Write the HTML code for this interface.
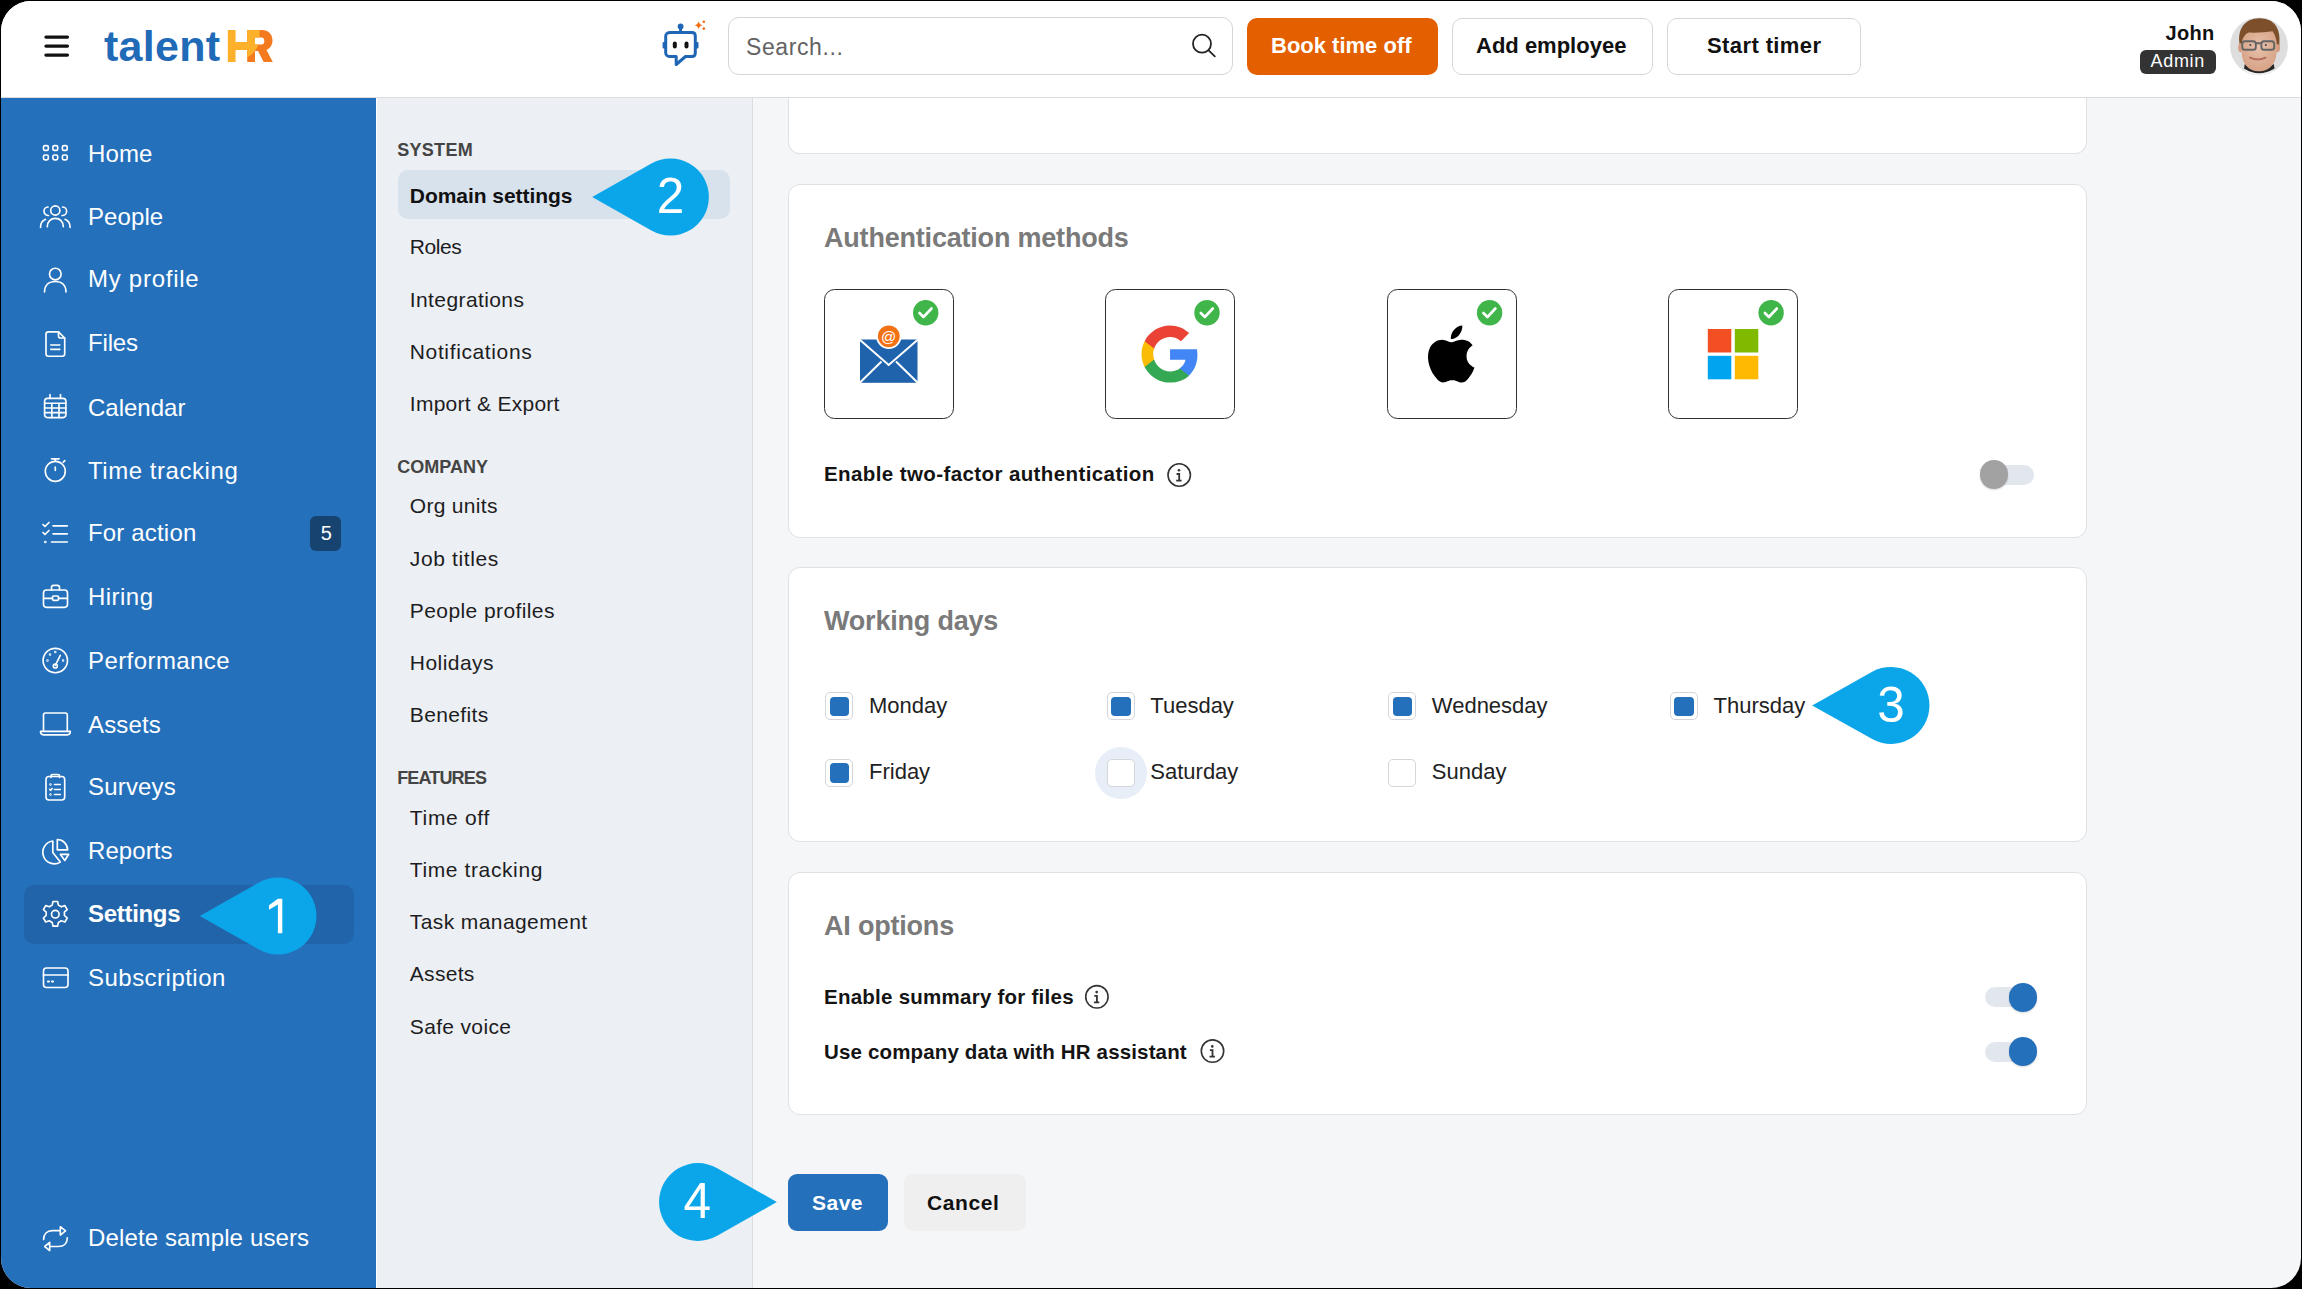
<!DOCTYPE html>
<html><head><meta charset="utf-8">
<style>
*{box-sizing:border-box;margin:0;padding:0}
html,body{width:2302px;height:1289px;overflow:hidden;background:#000}
body{font-family:"Liberation Sans",sans-serif;position:relative}
#frame{position:absolute;left:1px;top:1px;width:2300px;height:1287px;border-radius:30px;overflow:hidden;background:#f5f6f8}
#c{position:absolute;left:-1px;top:-1px;width:2302px;height:1289px}
.a{position:absolute}
.t{position:absolute;line-height:1;white-space:nowrap}
#hdr{position:absolute;left:0;top:0;width:2302px;height:98px;background:#fff;border-bottom:1px solid #dadcdf}
#side{position:absolute;left:0;top:98px;width:376px;height:1191px;background:#2470bb}
#sub{position:absolute;left:376px;top:98px;width:377px;height:1191px;background:#eceff3;border-left:1px solid #fff;border-right:1px solid #dcdee2}
.sn{color:#fff;font-size:24px;letter-spacing:0.45px}
.ic{position:absolute;overflow:visible}
.sec{color:#444;font-size:18px;font-weight:700;letter-spacing:0.3px}
.si{color:#1d1d1f;font-size:21px;letter-spacing:0.35px}
.card{position:absolute;left:788px;width:1299px;background:#fff;border:1px solid #dfe1e4;border-radius:12px}
.h2{color:#7a7a7a;font-size:27px;font-weight:700;letter-spacing:-0.2px}
.lbl{color:#141414;font-size:20.5px;font-weight:700;letter-spacing:0.25px}
.day{color:#222;font-size:22px}
.abox{position:absolute;width:130px;height:130px;border:1.9px solid #2f2f2f;border-radius:10.5px;background:#fff}
.chk{position:absolute;width:28px;height:28px;border:1px solid #d4d6d9;border-radius:5px;background:#fff}
.chk i{position:absolute;left:3.5px;top:3.5px;width:19.5px;height:19.5px;border-radius:4px;background:#2470bb}
.btn{position:absolute;border-radius:10px}
</style></head><body>
<div id="frame"><div id="c">

<!-- HEADER -->
<div id="hdr"></div>
<svg class="ic" style="left:0;top:0" width="300" height="97" viewBox="0 0 300 97">
  <g stroke="#111" stroke-width="3.4" stroke-linecap="round"><path d="M46 37.1H67.4M46 46.1H67.4M46 55.1H67.4"/></g>
</svg>
<div class="t" style="left:104px;top:25px;font-size:43px;font-weight:700;color:#1f6bb8;letter-spacing:0.3px">talent</div>
<svg class="ic" style="left:0;top:0" width="300" height="97" viewBox="0 0 300 97">
  <path fill="#f47a20" fill-rule="evenodd" d="M247.2 30.1H262C268.5 30.1 272.5 34.5 272.5 40.5C272.5 45 270 48.5 266.5 50L272.8 62H263.7L258 51H255V62H247.2ZM255 37.4H261.5C263.5 37.4 264.3 39 264.3 41C264.3 43 263.5 44.6 261.5 44.6H255Z"/>
  <path fill="#fdb02a" d="M227.8 30.1H235.6V42.1H247.2V30.1H259.6V37.4H255V44.6H258.5C256.5 50 252.5 54.5 247.2 57.5V49.9H235.6V62H227.8Z"/>
</svg>
<!-- robot -->
<svg class="ic" style="left:650px;top:10px" width="70" height="70" viewBox="650 10 70 70">
  <g fill="none" stroke="#1f66b5" stroke-width="3" stroke-linejoin="round">
    <path d="M670 32.6H692C694 32.6 695.3 34 695.3 36V53C695.3 55 694 56.5 692 56.5H685.5L676.2 64.5V56.5H670C668 56.5 665.7 55 665.7 53V36C665.7 34 668 32.6 670 32.6Z"/>
    <path d="M680.6 28.5V32.6"/>
  </g>
  <circle cx="680.6" cy="26.5" r="2.9" fill="#1f66b5"/>
  <rect x="662.6" y="42" width="3" height="6.5" rx="1" fill="#1f66b5"/>
  <rect x="695.5" y="42" width="3" height="6.5" rx="1" fill="#1f66b5"/>
  <rect x="672.8" y="41.6" width="4" height="7" rx="2" fill="#111"/>
  <rect x="684.5" y="41.6" width="4" height="7" rx="2" fill="#111"/>
  <path fill="#f26b0f" d="M698.6 21.2Q699.3 24.5 702.6 25.2Q699.3 25.9 698.6 29.2Q697.9 25.9 694.6 25.2Q697.9 24.5 698.6 21.2Z"/>
  <circle cx="703.8" cy="21.7" r="1.3" fill="#f26b0f"/>
  <circle cx="703.8" cy="28.6" r="1.3" fill="#f26b0f"/>
</svg>
<!-- search -->
<div class="a" style="left:728px;top:17px;width:505px;height:58px;border:1.3px solid #d6d6d6;border-radius:11px;background:#fff"></div>
<div class="t" style="left:746px;top:36px;font-size:23px;color:#636363;letter-spacing:0.6px">Search...</div>
<svg class="ic" style="left:1180px;top:25px" width="50" height="40" viewBox="1180 25 50 40">
  <circle cx="1202" cy="43.7" r="9" fill="none" stroke="#222" stroke-width="1.8"/>
  <path d="M1208.6 50.3L1214.8 56.3" stroke="#222" stroke-width="1.8" stroke-linecap="round"/>
</svg>
<div class="btn" style="left:1247px;top:17.5px;width:190.5px;height:57px;background:#e35f00"></div>
<div class="t" style="left:1271px;top:35px;font-size:22px;font-weight:700;color:#fff">Book time off</div>
<div class="btn" style="left:1452px;top:17.5px;width:200.5px;height:57px;background:#fff;border:1.3px solid #d6d6d6"></div>
<div class="t" style="left:1476px;top:35px;font-size:22px;font-weight:700;color:#111">Add employee</div>
<div class="btn" style="left:1667.3px;top:17.5px;width:194px;height:57px;background:#fff;border:1.3px solid #d6d6d6"></div>
<div class="t" style="left:1707px;top:35px;font-size:22px;font-weight:700;color:#111;letter-spacing:0.4px">Start timer</div>
<div class="t" style="left:2165.5px;top:23px;font-size:20px;font-weight:700;color:#111;letter-spacing:0.35px">John</div>
<div class="a" style="left:2140px;top:50px;width:75.5px;height:23.5px;border-radius:6px;background:#333"></div>
<div class="t" style="left:2150.5px;top:52.4px;font-size:18px;color:#fff;letter-spacing:0.7px">Admin</div>
<!-- avatar -->
<svg class="ic" style="left:2226px;top:14px" width="66" height="66" viewBox="2226 14 66 66">
  <defs><clipPath id="av"><circle cx="2259" cy="46.3" r="28.6"/></clipPath>
  <radialGradient id="skin" cx="0.5" cy="0.45" r="0.6"><stop offset="0" stop-color="#e6c0aa"/><stop offset="1" stop-color="#d6a184"/></radialGradient></defs>
  <circle cx="2259" cy="46.3" r="28.9" fill="#dedede"/>
  <g clip-path="url(#av)">
    <path fill="#f2f2f2" d="M2236 80Q2240 68 2259 68Q2278 68 2282 80Z"/>
    <path fill="#262626" d="M2244.8 64Q2259 74 2273.8 64L2274.5 68.5Q2259 78 2244 68.5Z"/>
    <ellipse cx="2240.8" cy="47.5" rx="2.6" ry="4.8" fill="#d39c80"/>
    <ellipse cx="2277.4" cy="47.5" rx="2.6" ry="4.8" fill="#d39c80"/>
    <path fill="url(#skin)" d="M2241.5 38C2241.5 31 2250 27.5 2259 27.5C2268 27.5 2276.8 31 2276.8 38L2276.6 51C2276.4 65.5 2268 71.3 2259 71.3C2250 71.3 2241.8 65.5 2241.6 51Z"/>
    <path fill="#7d4f2b" d="M2239.5 43.5C2237.5 30 2244 18.2 2259.5 18.2C2275 18.2 2281.2 29.5 2279.3 44.7L2276.8 44C2276.3 38.5 2275 34 2272.5 31.2C2266 31.8 2258 33.2 2248.5 32.6C2245 34.2 2242.3 38 2241.8 43.5Z"/>
    <g fill="none" stroke="#646464" stroke-width="1.9"><rect x="2242.3" y="41.2" width="13.5" height="8.6" rx="2.6"/><rect x="2261.4" y="41.2" width="12.8" height="8.6" rx="2.6"/><path d="M2255.8 43.2H2261.4"/></g>
    <circle cx="2250.3" cy="45" r="1" fill="#445"/><circle cx="2265.8" cy="45" r="1" fill="#445"/>
    <path d="M2250 57.6Q2258 61.2 2265.5 57.6" stroke="#b56e5c" stroke-width="2" fill="none" stroke-linecap="round"/>
  </g>
</svg>

<!-- SIDEBAR -->
<div id="side"></div>
<div class="a" style="left:23.5px;top:885px;width:330px;height:59px;border-radius:10px;background:#2164a9"></div>
<div class="t sn" style="left:88px;top:141.7px;letter-spacing:0.15px">Home</div>
<div class="t sn" style="left:88px;top:204.6px;letter-spacing:0.09px">People</div>
<div class="t sn" style="left:88px;top:267.1px;letter-spacing:0.73px">My profile</div>
<div class="t sn" style="left:88px;top:330.7px;letter-spacing:-0.15px">Files</div>
<div class="t sn" style="left:88px;top:395.6px;letter-spacing:0px">Calendar</div>
<div class="t sn" style="left:88px;top:458.5px;letter-spacing:0.55px">Time tracking</div>
<div class="t sn" style="left:88px;top:521.1px;letter-spacing:0.17px">For action</div>
<div class="t sn" style="left:88px;top:584.6px;letter-spacing:0.47px">Hiring</div>
<div class="t sn" style="left:88px;top:648.6px;letter-spacing:0.42px">Performance</div>
<div class="t sn" style="left:88px;top:712.9px;letter-spacing:0.17px">Assets</div>
<div class="t sn" style="left:88px;top:775.4px;letter-spacing:0.18px">Surveys</div>
<div class="t sn" style="left:88px;top:839.1px;letter-spacing:0.08px">Reports</div>
<div class="t sn" style="left:88px;top:902.4px;font-weight:700;letter-spacing:-0.3px">Settings</div>
<div class="t sn" style="left:88px;top:965.8px;letter-spacing:0.48px">Subscription</div>
<div class="t sn" style="left:88px;top:1226.1px;letter-spacing:0.13px">Delete sample users</div>
<div class="a" style="left:310px;top:515.5px;width:31px;height:35.5px;border-radius:6px;background:#164370"></div>
<div class="t" style="left:320.7px;top:523.3px;font-size:20px;color:#fff">5</div>

<svg class="ic" style="left:0;top:97px" width="376" height="1192" viewBox="0 97 376 1192">
 <g fill="none" stroke="#fff" stroke-width="1.65" stroke-linecap="round" stroke-linejoin="round">
  <!-- home grid -->
  <rect x="43.5" y="145.6" width="4.8" height="4.8" rx="1.5"/><rect x="52.9" y="145.6" width="4.8" height="4.8" rx="1.5"/><rect x="62.4" y="145.6" width="4.8" height="4.8" rx="1.5"/>
  <rect x="43.5" y="155" width="4.8" height="4.8" rx="1.5"/><rect x="52.9" y="155" width="4.8" height="4.8" rx="1.5"/><rect x="62.4" y="155" width="4.8" height="4.8" rx="1.5"/>
  <!-- people -->
  <circle cx="55.3" cy="210.5" r="4.6"/>
  <path d="M48 207A4 4 0 0 0 48.5 215.5M62.6 207A4 4 0 0 1 62.1 215.5"/>
  <path d="M47.3 226.7C47.3 221.5 50.8 218.4 55.3 218.4C59.8 218.4 63.3 221.5 63.3 226.7"/>
  <path d="M40.5 227.5C40.5 223 42.5 220.5 45.5 219.3M70.1 227.5C70.1 223 68.1 220.5 65.1 219.3"/>
  <!-- my profile -->
  <circle cx="55.3" cy="274" r="5.8"/>
  <path d="M44.5 292C44.5 285 49 281.5 55.3 281.5C61.6 281.5 66 285 66 292"/>
  <!-- files -->
  <path d="M48.5 331.8H58.5L64.7 338V353.8Q64.7 356.2 62.3 356.2H48.5Q46 356.2 46 353.8V334.3Q46 331.8 48.5 331.8Z"/>
  <path d="M58.5 331.8V336Q58.5 338 60.5 338H64.7"/>
  <path d="M50.8 345H59.8M50.8 349.3H59.8"/>
  <!-- calendar -->
  <rect x="44.6" y="398.3" width="21.3" height="19.3" rx="3"/>
  <path d="M50 394.5V398.3M60.5 394.5V398.3M44.6 403.2H65.9M44.6 408H65.9M44.6 412.6H65.9M51.8 403.2V417.6M59 403.2V417.6"/>
  <!-- timer -->
  <circle cx="55.3" cy="471.3" r="10"/>
  <path d="M51.5 458.8H59.1M55.3 458.8V461.3M55.3 467V470.5M63.3 462.2L64.8 460.7"/>
  <!-- for action -->
  <path d="M43 524.5L45 526.5L49 522.5M43 532.5L45 534.5L49 530.5"/>
  <path d="M53 525.8H67.3M53 533.8H67.3M51.5 542H67.3"/>
  <circle cx="45.3" cy="542" r="0.5"/>
  <!-- hiring -->
  <rect x="43.5" y="590" width="24" height="17.3" rx="3"/>
  <path d="M51.5 590V587.5Q51.5 585.3 53.7 585.3H57.3Q59.5 585.3 59.5 587.5V590M43.5 598.3H52.5M58.5 598.3H67.5"/>
  <rect x="52.5" y="596" width="6" height="4.3" rx="1"/>
  <!-- performance -->
  <circle cx="55.3" cy="660.5" r="12.2"/>
  <path d="M55.3 665.3L60.3 655.3"/>
  <circle cx="55.3" cy="666" r="2"/>
  <circle cx="47.5" cy="660.5" r="0.4"/><circle cx="50" cy="654.5" r="0.4"/><circle cx="55.3" cy="652" r="0.4"/><circle cx="63.1" cy="660.5" r="0.4"/>
  <!-- assets laptop -->
  <path d="M43.5 730.5V715Q43.5 713 45.5 713H65.3Q67.3 713 67.3 715V730.5"/>
  <path d="M40.5 731.3H70.3Q70.3 734.8 67.3 734.8H43.5Q40.5 734.8 40.5 731.3Z"/>
  <!-- surveys -->
  <rect x="46" y="776.5" width="18.7" height="23.5" rx="3"/>
  <path d="M51 777.5V776Q51 774.5 52.5 774.5H58Q59.5 774.5 59.5 776V777.5"/>
  <path d="M54.5 784.5H60.3M54.5 789.5H60.3M54.5 794.5H60.3M49.7 789.3L50.7 790.3L52.2 788.5"/>
  <circle cx="50.5" cy="784.5" r="0.4"/><circle cx="50.5" cy="794.5" r="0.4"/>
  <!-- reports -->
  <path d="M52.8 841V852.4L60.3 862.1A11.45 11.45 0 1 1 52.8 841Z"/>
  <path d="M57.3 839.5V849.9H67.6A10.3 10.3 0 0 0 57.3 839.5Z"/>
  <path d="M60.3 854.3H68.7L64.8 860.5Z"/>
  <!-- settings -->
  <circle cx="55.3" cy="914.2" r="3.8"/>
  <path d="M53 901.5H57.6L58.4 905.1L61.3 906.8L64.9 905.6L67.2 909.6L64.4 912.1V915.4L67.2 918L64.9 922L61.3 920.8L58.4 922.5L57.6 926.1H53L52.2 922.5L49.3 920.8L45.7 922L43.4 918L46.2 915.4V912.1L43.4 909.6L45.7 905.6L49.3 906.8L52.2 905.1Z"/>
  <!-- subscription -->
  <rect x="43.5" y="968" width="24.5" height="19.5" rx="3"/>
  <path d="M43.5 975H68"/>
  <path d="M48 981.5H49M52 981.5H53" stroke-width="2.2"/>
  <!-- delete sample users -->
  <path d="M43.6 1239.6C43.6 1234 47 1230.6 52.5 1230.6H60.3"/>
  <path d="M60.3 1226.7L65.5 1230.9L60.3 1235.1Z"/>
  <path d="M67.3 1237.9C67.3 1243 64 1246.5 58.5 1246.5H49.7"/>
  <path d="M49.7 1242.4L44.7 1246.5L49.7 1250.6Z"/>
 </g>
</svg>

<!-- SUB NAV -->
<div id="sub"></div>
<div class="a" style="left:398px;top:170.2px;width:332px;height:49.3px;border-radius:10px;background:#d8e2ed"></div>
<div class="t sec" style="left:397.2px;top:140.8px">SYSTEM</div>
<div class="t si" style="left:409.8px;top:184.8px;font-weight:700;color:#111;letter-spacing:-0.05px">Domain settings</div>
<div class="t si" style="left:409.8px;top:236.2px;letter-spacing:-0.43px">Roles</div>
<div class="t si" style="left:409.8px;top:288.8px;letter-spacing:0.4px">Integrations</div>
<div class="t si" style="left:409.8px;top:341px;letter-spacing:0.63px">Notifications</div>
<div class="t si" style="left:409.8px;top:393.3px;letter-spacing:0.27px">Import &amp; Export</div>
<div class="t sec" style="left:397.2px;top:458.4px;letter-spacing:0.02px">COMPANY</div>
<div class="t si" style="left:409.8px;top:495.3px;letter-spacing:0.3px">Org units</div>
<div class="t si" style="left:409.8px;top:548.1px;letter-spacing:0.62px">Job titles</div>
<div class="t si" style="left:409.8px;top:600.1px;letter-spacing:0.41px">People profiles</div>
<div class="t si" style="left:409.8px;top:652.3px;letter-spacing:0.45px">Holidays</div>
<div class="t si" style="left:409.8px;top:704.3px;letter-spacing:0.38px">Benefits</div>
<div class="t sec" style="left:397.2px;top:768.5px;letter-spacing:-0.85px">FEATURES</div>
<div class="t si" style="left:409.8px;top:806.8px;letter-spacing:0.69px">Time off</div>
<div class="t si" style="left:409.8px;top:858.5px;letter-spacing:0.61px">Time tracking</div>
<div class="t si" style="left:409.8px;top:911.4px;letter-spacing:0.41px">Task management</div>
<div class="t si" style="left:409.8px;top:963.1px;letter-spacing:0.31px">Assets</div>
<div class="t si" style="left:409.8px;top:1016px;letter-spacing:0.34px">Safe voice</div>

<!-- MAIN CARDS -->
<div class="card" style="top:98px;height:56px;border-top:none;border-radius:0 0 12px 12px"></div>
<div class="card" style="top:183.5px;height:354.5px"></div>
<div class="card" style="top:567.3px;height:274.5px"></div>
<div class="card" style="top:871.8px;height:243.3px"></div>

<div class="t h2" style="left:824px;top:224.6px">Authentication methods</div>
<div class="abox" style="left:824px;top:289.3px"></div>
<div class="abox" style="left:1105.3px;top:289.3px"></div>
<div class="abox" style="left:1386.8px;top:289.3px"></div>
<div class="abox" style="left:1668.3px;top:289.3px"></div>
<svg class="ic" style="left:800px;top:280px" width="1020" height="150" viewBox="800 280 1020 150">
  <g id="ck"><circle cx="925.7" cy="312.8" r="12.7" fill="#3fb54a"/><path d="M919.5 313L923.5 317L931.5 308.5" fill="none" stroke="#fff" stroke-width="2.6" stroke-linecap="round" stroke-linejoin="round"/></g>
  <use href="#ck" x="281.3"/><use href="#ck" x="563.9"/><use href="#ck" x="845.4"/>
  <!-- envelope -->
  <rect x="860" y="339.5" width="57.5" height="43.3" fill="#1f63ad"/>
  <path d="M859.5 339.5L888.7 365L918 339.5M859.5 383L881.5 361.5M918 383L896 361.5" fill="none" stroke="#fff" stroke-width="2"/>
  <circle cx="888.8" cy="336.3" r="11.8" fill="#f47216" stroke="#fff" stroke-width="1.8"/>
  <text x="888.5" y="341.5" font-family="Liberation Sans" font-size="15" fill="#fff" text-anchor="middle">@</text>
  <!-- google G -->
  <g transform="translate(1141.5 325.5) scale(2.38)">
    <path fill="#4285F4" d="M23.5 12.3c0-.8-.1-1.6-.2-2.3H12v4.4h6.5c-.3 1.5-1.1 2.7-2.4 3.6v3h3.9c2.2-2.1 3.5-5.1 3.5-8.7z"/>
    <path fill="#34A853" d="M12 24c3.2 0 6-1.1 8-2.9l-3.9-3c-1.1.7-2.4 1.2-4.1 1.2-3.1 0-5.8-2.1-6.7-5H1.3v3.1C3.3 21.3 7.4 24 12 24z"/>
    <path fill="#FBBC05" d="M5.3 14.3c-.2-.7-.4-1.5-.4-2.3s.1-1.6.4-2.3V6.6H1.3C.5 8.2 0 10 0 12s.5 3.8 1.3 5.4l4-3.1z"/>
    <path fill="#EA4335" d="M12 4.8c1.8 0 3.3.6 4.6 1.8l3.4-3.4C17.9 1.2 15.2 0 12 0 7.4 0 3.3 2.7 1.3 6.6l4 3.1c.9-2.8 3.6-4.9 6.7-4.9z"/>
  </g>
  <!-- apple -->
  <g transform="translate(1420.6 320.4) scale(2.8)">
    <path fill="#000" d="M16.4 12.8c0-2.6 2.1-3.8 2.2-3.9-1.2-1.8-3.1-2-3.7-2-1.6-.2-3.1.9-3.9.9-.8 0-2-.9-3.3-.9-1.7 0-3.3 1-4.2 2.5-1.8 3.1-.5 7.7 1.3 10.2.9 1.2 1.9 2.6 3.2 2.6 1.3-.1 1.8-.8 3.3-.8 1.6 0 2 .8 3.4.8 1.4 0 2.3-1.3 3.1-2.5 1-1.4 1.4-2.8 1.4-2.9-.1 0-2.8-1-2.8-4zM13.8 5.1c.7-.9 1.2-2.1 1.1-3.3-1 0-2.3.7-3 1.6-.7.8-1.2 2-1.1 3.2 1.1.1 2.3-.6 3-1.5z"/>
  </g>
  <!-- microsoft -->
  <rect x="1707.8" y="329" width="23.5" height="23.5" fill="#f25022"/>
  <rect x="1734.8" y="329" width="23.5" height="23.5" fill="#7fba00"/>
  <rect x="1707.8" y="355.8" width="23.5" height="23.5" fill="#00a4ef"/>
  <rect x="1734.8" y="355.8" width="23.5" height="23.5" fill="#ffb900"/>
</svg>

<div class="t lbl" style="left:824px;top:464.2px;letter-spacing:0.4px">Enable two-factor authentication</div>
<svg class="ic" style="left:1160px;top:455px" width="40" height="40" viewBox="1160 455 40 40"><g id="inf"><circle cx="1179.2" cy="475" r="11.2" fill="none" stroke="#333" stroke-width="1.6"/><circle cx="1179" cy="470.3" r="1.3" fill="#333"/><path d="M1176.6 474H1179.2V480.6M1176.2 480.6H1181.6" fill="none" stroke="#333" stroke-width="1.8"/></g></svg>
<!-- toggle off -->
<div class="a" style="left:1984px;top:465px;width:50px;height:20px;border-radius:10px;background:#e2e7ee"></div>
<div class="a" style="left:1979.6px;top:460.2px;width:28.8px;height:28.8px;border-radius:50%;background:#a2a2a2;box-shadow:0 1px 2px rgba(0,0,0,.15)"></div>

<div class="t h2" style="left:824px;top:608.4px">Working days</div>
<div class="a" style="left:1094.8px;top:746.6px;width:52px;height:52px;border-radius:50%;background:#e7eef7"></div>
<div class="chk" style="left:825.3px;top:692.3px"><i></i></div>
<div class="chk" style="left:1106.6px;top:692.3px"><i></i></div>
<div class="chk" style="left:1388.1px;top:692.3px"><i></i></div>
<div class="chk" style="left:1669.8px;top:692.3px"><i></i></div>
<div class="chk" style="left:825.3px;top:758.5px"><i></i></div>
<div class="chk" style="left:1106.6px;top:758.5px"></div>
<div class="chk" style="left:1388.1px;top:758.5px"></div>
<div class="t day" style="left:869px;top:694.9px">Monday</div>
<div class="t day" style="left:1150.3px;top:694.9px">Tuesday</div>
<div class="t day" style="left:1431.8px;top:694.9px">Wednesday</div>
<div class="t day" style="left:1713.5px;top:694.9px">Thursday</div>
<div class="t day" style="left:869px;top:761.1px">Friday</div>
<div class="t day" style="left:1150.3px;top:761.1px">Saturday</div>
<div class="t day" style="left:1431.8px;top:761.1px">Sunday</div>

<div class="t h2" style="left:824px;top:912.6px">AI options</div>
<div class="t lbl" style="left:824px;top:986.9px">Enable summary for files</div>
<div class="t lbl" style="left:824px;top:1041.8px;letter-spacing:0.15px">Use company data with HR assistant</div>
<svg class="ic" style="left:1070px;top:975px" width="170" height="100" viewBox="1070 975 170 100">
  <use href="#inf" x="-82.3" y="521.8"/><use href="#inf" x="33.3" y="576.1"/>
</svg>
<div class="a" style="left:1984.8px;top:987px;width:50px;height:20px;border-radius:10px;background:#e2e7ee"></div>
<div class="a" style="left:2008.6px;top:983.2px;width:28.8px;height:28.8px;border-radius:50%;background:#2470bb;box-shadow:0 1px 2px rgba(0,0,0,.15)"></div>
<div class="a" style="left:1984.8px;top:1041.8px;width:50px;height:20px;border-radius:10px;background:#e2e7ee"></div>
<div class="a" style="left:2008.6px;top:1037.2px;width:28.8px;height:28.8px;border-radius:50%;background:#2470bb;box-shadow:0 1px 2px rgba(0,0,0,.15)"></div>

<div class="btn" style="left:787.8px;top:1173.8px;width:100.7px;height:57px;border-radius:9px;background:#2470bb"></div>
<div class="t" style="left:812px;top:1191.9px;font-size:21px;font-weight:700;color:#fff;letter-spacing:0.5px">Save</div>
<div class="btn" style="left:903.6px;top:1173.8px;width:122.3px;height:57px;border-radius:9px;background:#efefef"></div>
<div class="t" style="left:927px;top:1191.9px;font-size:21px;font-weight:700;color:#111;letter-spacing:0.6px">Cancel</div>

<!-- CALLOUTS -->
<svg class="ic" style="left:0;top:0" width="2302" height="1289" viewBox="0 0 2302 1289">
  <g fill="#0ba6ea">
    <path d="M199.8 916.0L259.0 882.5A38.5 38.5 0 1 1 259.0 949.5Z"/>
    <path d="M592.2 197.0L651.4 163.5A38.5 38.5 0 1 1 651.4 230.5Z"/>
    <path d="M1812.2 705.4L1872.2 671.8A38.5 38.5 0 1 1 1872.2 739.0Z"/>
    <path d="M776.8 1202.0L717.2 1235.8A38.9 38.9 0 1 1 717.2 1168.2Z"/>
  </g>
  <path fill="#fff" d="M277.9 898.7H282.3V933.2H277.9V904.6L269 909.8V905.2Z"/>
  <g fill="#fff" font-family="Liberation Sans" font-size="49.5" text-anchor="middle">
    
    <text x="670.5" y="213.1">2</text>
    <text x="1891" y="722.4">3</text>
    <text x="697.3" y="1218.1">4</text>
  </g>
</svg>

</div></div>
</body></html>
